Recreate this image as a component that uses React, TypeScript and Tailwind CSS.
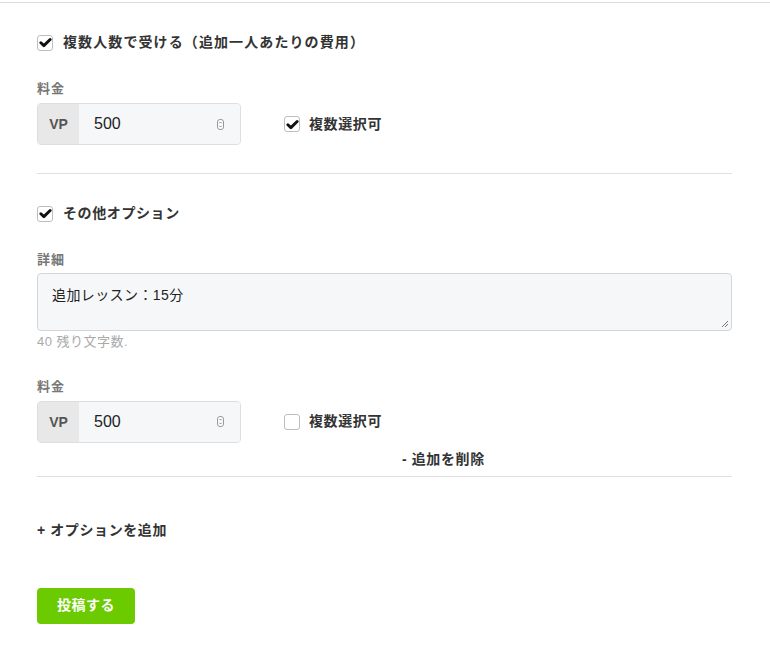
import React from "react";

const Check = ({ checked }: { checked: boolean }) => (
  <span className="flex h-4 w-4 shrink-0 items-center justify-center rounded-[3px] border border-[#bdbdbd] bg-white">
    {checked && (
      <svg viewBox="0 0 16 16" className="h-[13px] w-[13px]">
        <path d="M2.3 8.3 L6 11.8 L13.7 4.3" fill="none" stroke="#111" strokeWidth="3.6" strokeLinecap="round" strokeLinejoin="round" />
      </svg>
    )}
  </span>
);

const Spinner = () => (
  <span className="flex h-[11px] w-[7px] flex-col items-center justify-center rounded-[3px] border border-[#999] bg-white">
    <svg viewBox="0 0 6 10" className="h-[9px] w-[5px]">
      <path d="M1.5 3.5 L3 2 L4.5 3.5 M1.5 6.5 L3 8 L4.5 6.5" fill="none" stroke="#555" strokeWidth="0.8" />
    </svg>
  </span>
);

const PriceRow = ({ checked }: { checked: boolean }) => (
  <div className="flex items-center">
    <div className="flex h-[42px] w-[204px] overflow-hidden rounded-[4px] border border-[#dedede]">
      <div className="flex w-[41px] items-start justify-center bg-[#e8e8e8] pt-[10px] text-[14px] font-bold text-[#555]">VP</div>
      <div className="flex flex-1 items-center justify-between bg-[#f6f7f9] pl-[15px] pr-[16px] text-[16px] text-[#222]">
        <span>500</span>
        <Spinner />
      </div>
    </div>
    <label className="ml-[43px] flex items-center gap-[9px] text-[14px] font-bold tracking-[0.6px] text-[#333]">
      <Check checked={checked} />
      複数選択可
    </label>
  </div>
);

const Label = ({ children }: { children: React.ReactNode }) => (
  <div className="text-[13px] leading-[18px] font-bold tracking-[1px] text-[#777]">{children}</div>
);

export default function App() {
  return (
    <div
      className="min-h-[653px] w-[770px] bg-white"
      style={{ fontFamily: '"Liberation Sans", "Noto Sans CJK JP", sans-serif' }}
    >
      <div className="mt-[2px] h-px w-full bg-[#dcdcdc]" />
      <div className="px-[37px] pr-[38px]">
        <label className="mt-[29px] flex items-center gap-[10px] text-[14px] font-bold tracking-[1.1px] text-[#333]">
          <Check checked />
          複数人数で受ける（追加一人あたりの費用）
        </label>
        <div className="mt-[27px]">
          <Label>料金</Label>
        </div>
        <div className="mt-[5px]">
          <PriceRow checked />
        </div>
        <div className="mt-[28px] h-px bg-[#e0e0e0]" />

        <label className="mt-[29px] flex items-center gap-[10px] text-[14px] font-bold tracking-[0.6px] text-[#333]">
          <Check checked />
          その他オプション
        </label>
        <div className="mt-[27px]">
          <Label>詳細</Label>
        </div>
        <div className="relative mt-[4px] h-[58px] rounded-[4px] border border-[#d6d6d6] bg-[#f6f7f9] px-[14px] pt-[11px] text-[14px] tracking-[0.4px] text-[#222]">
          追加レッスン：15分
          <svg viewBox="0 0 8 8" className="absolute bottom-[2px] right-[2px] h-[8px] w-[8px]">
            <path d="M7 1 L1 7 M7 4 L4 7" stroke="#555" strokeWidth="0.8" />
          </svg>
        </div>
        <div className="mt-[1px] text-[13px] tracking-[0.5px] text-[#aaa]">40 残り文字数.</div>

        <div className="mt-[26px]">
          <Label>料金</Label>
        </div>
        <div className="mt-[5px]">
          <PriceRow checked={false} />
        </div>
        <div className="mt-[6px] pl-[365px] text-[14px] font-bold tracking-[0.6px] text-[#333]">- 追加を削除</div>
        <div className="mt-[6px] h-px bg-[#e0e0e0]" />

        <div className="mt-[43px] text-[14px] font-bold tracking-[0.6px] text-[#333]">+ オプションを追加</div>

        <button className="mt-[47px] flex h-[36px] w-[98px] items-center justify-center rounded-[4px] bg-[#6ccb00] text-[14px] font-bold tracking-[0.5px] text-white">
          投稿する
        </button>
      </div>
    </div>
  );
}
